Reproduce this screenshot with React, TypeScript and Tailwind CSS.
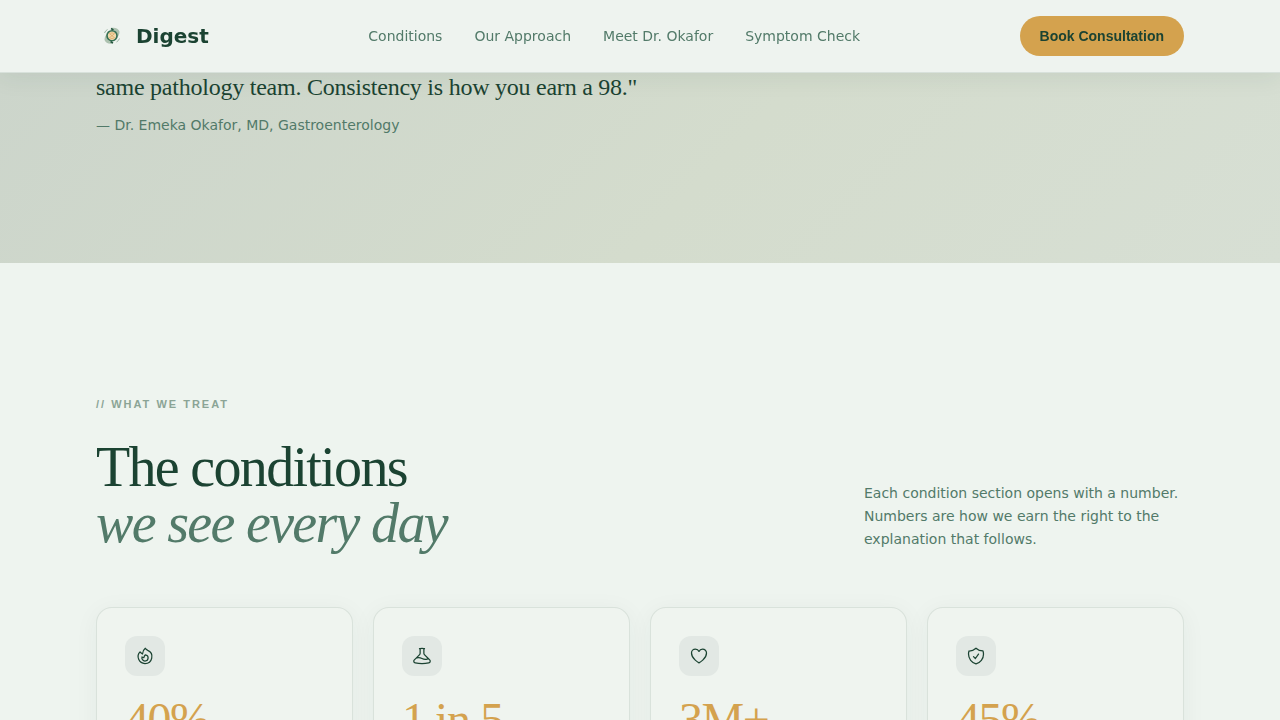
import type { IconType } from "react-icons";
import {
  HiOutlineBeaker,
  HiOutlineFire,
  HiOutlineHeart,
  HiOutlineShieldCheck,
} from "react-icons/hi2";

interface Condition {
  id: string;
  stat: string;
  Icon: IconType;
}

const navLinks = [
  { label: "Conditions", href: "#conditions" },
  { label: "Our Approach", href: "#approach" },
  { label: "Meet Dr. Okafor", href: "#doctor" },
  { label: "Symptom Check", href: "#symptoms" },
];

const conditions: Condition[] = [
  { id: "reflux", stat: "40%", Icon: HiOutlineFire },
  { id: "ibs", stat: "1 in 5", Icon: HiOutlineBeaker },
  { id: "ibd", stat: "3M+", Icon: HiOutlineHeart },
  { id: "screening", stat: "45%", Icon: HiOutlineShieldCheck },
];

function LogoMark() {
  return (
    <svg viewBox="0 0 32 32" className="size-8" fill="none" aria-hidden="true">
      {/* Outer leaves */}
      <path d="M15 8c4-1 7.500.5 8.500 3.500 0 3-1 5-3 6.500 1-4-1-7.500-5.500-10z" fill="#adc2b0" />
      <path d="M17 23.500c-4 1-7.500-.5-8.500-3.500 0-3 1-5 3-6.500-1 4 1 7.500 5.500 10z" fill="#adc2b0" />
      <path d="M8.500 13c.6-1.600 1.600-2.800 3-3.500M23.500 18.500c-.6 1.600-1.600 2.800-3 3.500" stroke="#9bb5a3" />
      <circle cx="16" cy="15.700" r="5" fill="#efd9ae" stroke="#356f52" strokeWidth="1.600" />
      <path d="M15 8.500l2.500 1.500M17 23l-2.500-1.500" stroke="#24573f" strokeWidth="1.500" />
      {/* Center coil */}
      <path
        d="M13.500 13.700l5 4M18.500 13.700l-5 4M13.500 17.700c1.500 1 3.500 1 5 0M13.500 13.700c1.500-1 3.500-1 5 0"
        stroke="#d9a862"
        strokeWidth="0.800"
      />
    </svg>
  );
}

function Header() {
  return (
    <header className="sticky top-0 z-10 border-b border-[#1b4332]/10 bg-[#eef3ef] shadow-[0_4px_24px_rgba(27,67,50,0.08)]">
      <div className="mx-auto flex h-18 w-full max-w-6xl items-center justify-between px-8">
        <a href="#top" className="flex items-center gap-2 text-xl font-bold text-[#1b4332]">
          <LogoMark />
          Digest
        </a>
        <nav className="flex gap-8 text-sm text-[#527a69]">
          {navLinks.map((link) => (
            <a key={link.href} href={link.href}>
              {link.label}
            </a>
          ))}
        </nav>
        <button
          type="button"
          className="h-10 rounded-full bg-[#d4a24e] px-5 font-['Liberation_Sans',sans-serif] text-sm font-bold text-[#1b4332]"
        >
          Book Consultation
        </button>
      </div>
    </header>
  );
}

function Quote() {
  return (
    <section className="bg-linear-135 from-[#ccd5cb] via-[#d4dccd] via-55% to-[#d7dfd4]">
      <figure className="mx-auto w-full max-w-6xl px-8 pb-32">
        <blockquote className="font-['Liberation_Serif',serif] text-2xl leading-7 tracking-[-0.01em] text-[#1b4332]">
          same pathology team. Consistency is how you earn a 98."
        </blockquote>
        <figcaption className="mt-3.5 text-sm text-[#527a69]">
          — Dr. Emeka Okafor, MD, Gastroenterology
        </figcaption>
      </figure>
    </section>
  );
}

function ConditionCard({ stat, Icon }: Condition) {
  return (
    <article className="rounded-2xl border border-[#1b4332]/10 bg-[#eff4ef] p-7 shadow-[0_4px_24px_rgba(27,67,50,0.05)]">
      <div className="flex size-10 items-center justify-center rounded-xl bg-[#e2e8e4] text-[#1b4332]">
        <Icon className="size-5" aria-hidden="true" />
      </div>
      <p className="mt-5 font-['Liberation_Serif',serif] text-5xl leading-12 tracking-[-0.03em] text-[#d4a24e]">
        {stat}
      </p>
    </article>
  );
}

function Conditions() {
  return (
    <section id="conditions" className="mx-auto w-full max-w-6xl px-8 py-32">
      <div className="flex items-end justify-between gap-8">
        <div>
          <p className="font-['Liberation_Sans',sans-serif] text-[11px] leading-[26px] font-bold tracking-[2px] text-[#8ba496]">
            // WHAT WE TREAT
          </p>
          <h2 className="mt-[22px] font-['Liberation_Serif',serif] text-[56px] leading-14 tracking-[-0.03em] text-[#1b4332]">
            The conditions
            <br />
            <em className="text-[#527a69]">we see every day</em>
          </h2>
        </div>
        <p className="w-80 text-sm leading-[23px] text-[#527a69]">
          Each condition section opens with a number. Numbers are how we earn
          the right to the explanation that follows.
        </p>
      </div>
      <div className="mt-14 grid grid-cols-4 gap-5">
        {conditions.map((condition) => (
          <ConditionCard key={condition.id} {...condition} />
        ))}
      </div>
    </section>
  );
}

export default function App() {
  return (
    <div
      id="top"
      className="h-screen overflow-hidden bg-[#eef4ef] font-['DejaVu_Sans',sans-serif]"
    >
      <Header />
      <main>
        <Quote />
        <Conditions />
      </main>
    </div>
  );
}
